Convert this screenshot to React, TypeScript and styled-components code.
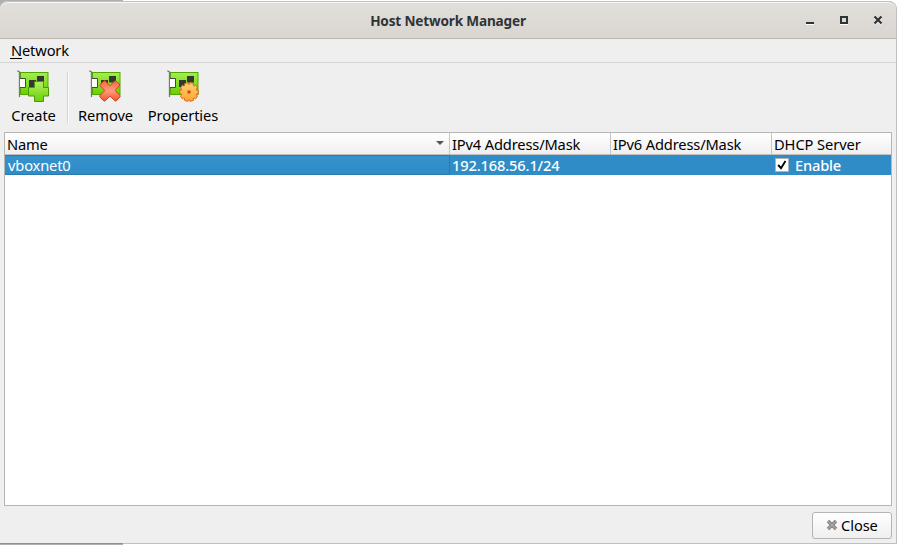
import React from "react";
import styled, { createGlobalStyle } from "styled-components";

const GlobalStyle = createGlobalStyle`
  * { box-sizing: border-box; }
  body { margin: 0; background: #fff; overflow: hidden; }
`;

const Desktop = styled.div`
  width: 898px;
  height: 545px;
  padding-top: 1px;
  background:
    linear-gradient(#b0b0b0, #b0b0b0) 0 0 / 123px 100% no-repeat,
    #fff;
  font: 14.667px/20px "Noto Sans", sans-serif;
  color: #000;
`;

const Window = styled.main`
  display: flex;
  flex-direction: column;
  width: 897px;
  height: 543px;
  border-right: 1px solid #bfbfbf;
  border-bottom: 1px solid #bfbfbf;
  border-radius: 8px 8px 0 0;
  background: #efefef;
`;

const TitleBar = styled.header`
  display: grid;
  grid-template-columns: 1fr auto 1fr;
  align-items: center;
  flex: none;
  height: 38px;
  border-top: 1px solid #bfc2bf;
  border-bottom: 1px solid #bfb8b1;
  border-radius: 8px 8px 0 0;
  background: linear-gradient(#e2dedb, #d9d5d0);
  box-shadow: inset 0 1px #f8f7f6;
`;

const Title = styled.h1`
  grid-column: 2;
  margin: 0;
  padding-top: 2px;
  color: #2e3436;
  font-size: 13.6px;
  font-weight: 700;
  line-height: 20px;
`;

const WindowControls = styled.div`
  display: flex;
  justify-content: flex-end;
  gap: 18px;
  padding-right: 10px;
`;

const ControlButton = styled.button`
  width: 16px;
  height: 16px;
  padding: 0;
  border: 0;
  background: none;
  svg { display: block; }
`;

const MenuBar = styled.nav`
  flex: none;
  height: 24px;
  padding: 1px 11px;
  border-bottom: 1px solid #d5d5d5;
`;

const Mnemonic = styled.span`
  display: inline-block;
  height: 19px;
  margin-left: -1px;
  padding-left: 1px;
  border-bottom: 1px solid #000;
  line-height: 20px;
`;

const Text = styled.span<{ $spacing?: number; $weight?: number }>`
  letter-spacing: ${({ $spacing = -0.08 }) => $spacing}px;
  font-weight: ${({ $weight }) => $weight ?? "inherit"};
  white-space: nowrap;
`;

const Toolbar = styled.div`
  display: flex;
  flex: none;
  height: 69px;
`;

const ToolButton = styled.button<{ $width: number }>`
  display: flex;
  flex-direction: column;
  align-items: center;
  width: ${({ $width }) => $width}px;
  padding: 7px 0 0;
  border: 0;
  background: none;
  font: inherit;
  color: inherit;
  svg { display: block; margin: 0 1px 3px 0; }
`;

const Separator = styled.div`
  width: 2px;
  height: 51px;
  margin-top: 9px;
  border-left: 1px solid #d5d5d5;
  border-right: 1px solid #fafafa;
`;

const Table = styled.section`
  flex: 1;
  margin: 0 4px;
  border: 1px solid #b5b5b5;
  background: #fff;
`;

const columns = "445px 161px 161px 1fr";

const HeaderRow = styled.div`
  display: grid;
  grid-template-columns: ${columns};
  height: 22px;
  background: linear-gradient(#fff, #efefef);
  border-bottom: 1px solid #c0c0c0;
`;

const HeaderCell = styled.div`
  display: flex;
  justify-content: space-between;
  padding: 1px 4px 0 2px;
  border-right: 1px solid #c6c6c6;
  &:last-child { border-right: 0; }
`;

const SortArrow = styled.svg`
  margin-top: 6px;
`;

const DataRow = styled.div`
  display: grid;
  grid-template-columns: ${columns};
  grid-template-rows: 20px;
  height: 20px;
  background: #308cc6;
  color: #fff;
  line-height: 18px;
`;

const DataCell = styled.div`
  display: flex;
  align-items: center;
  padding: 0 3px 1px 2px;
  &:first-child {
    padding: 0 3px;
    border: 1px solid #2a7cb0;
    border-left: 0;
    background: linear-gradient(#3592cc, #308cc6);
  }
  &:last-child { padding-left: 3px; }
`;

const CheckBox = styled.span`
  display: flex;
  width: 14px;
  height: 14px;
  margin-right: 6px;
  border: 1px solid #b2b2b2;
  background: #fff;
`;

const Footer = styled.footer`
  display: flex;
  justify-content: flex-end;
  flex: none;
  height: 37px;
  padding: 6px 4px 4px;
`;

const CloseButton = styled.button`
  display: flex;
  align-items: center;
  gap: 3px;
  width: 80px;
  height: 27px;
  padding: 0 0 1px 13px;
  border: 1px solid #b4b4b4;
  border-radius: 3px;
  background: linear-gradient(#fff, #efefef);
  font: inherit;
  color: #000;
`;

const BottomEdge = styled.div`
  width: 123px;
  height: 1px;
  margin-top: -1px;
  background: #909090;
`;

type Action = "add" | "remove" | "settings";

const TEETH = 10;

// Outline of a cog: four points per tooth, root-tip-tip-root.
const gearPoints = Array.from({ length: TEETH }, (_, i) =>
  [
    [-0.23, 7.9],
    [-0.2, 9.5],
    [0.2, 9.5],
    [0.23, 7.9],
  ].map(([offset, radius]) => {
    const angle = ((i + 0.5) * 2 * Math.PI) / TEETH + offset;
    return `${(radius * Math.sin(angle)).toFixed(2)},${(-radius * Math.cos(angle)).toFixed(2)}`;
  }),
)
  .flat()
  .join(" ");

function Gear() {
  return (
    <g transform="translate(22 22)">
      <polygon points={gearPoints} fill="url(#amber)" stroke="#dd6516" strokeWidth=".9" strokeLinejoin="round" />
      <circle r="1.8" fill="#d34b0a" />
    </g>
  );
}

function CardIcon({ action }: { action: Action }) {
  const board = `board-${action}`;
  return (
    <svg width="32" height="32" viewBox="0 0 32 32" overflow="visible">
      <defs>
        <linearGradient id={board} x2="0" y2="1">
          <stop stopColor="#a4ed50" /><stop offset="1" stopColor="#6bce00" />
        </linearGradient>
        <linearGradient id="lime" x2="0" y2="1">
          <stop stopColor="#b2ef66" /><stop offset="1" stopColor="#6bd000" />
        </linearGradient>
        <linearGradient id="coral" x2="0" y2="1">
          <stop stopColor="#f4653f" /><stop offset=".5" stopColor="#ff9b7d" /><stop offset="1" stopColor="#f4522d" />
        </linearGradient>
        <linearGradient id="amber" x2="0" y2="1">
          <stop stopColor="#ffd078" /><stop offset="1" stopColor="#ffa52e" />
        </linearGradient>
      </defs>
      <rect x="3.5" y="2.5" width="27.5" height="22" fill={`url(#${board})`} stroke="#52a800" />
      <path d="M.3 .8L2.5 2V27" fill="none" stroke="#777" strokeWidth="1.3" />
      <path d="M3 8.5H8.5V17.5H3" fill="#fff" stroke="#424a3b" />
      <path d="M12 10h7v7h-7zM20 6h7v6.5h-7z" fill="#343832" />
      {action === "add" && (
        <path d="M17.5 11.5H26.5V17.5H31.5V26H26.5V31.5H17.5V26H11.5V17.5H17.5Z" fill="url(#lime)" stroke="#479c00" />
      )}
      {action === "remove" && (
        <path d="M15.8 10.5L21 15.7L26.2 10.5Q28.8 11.8 31 15L26.2 20.5L31.4 26Q29.5 29.3 26.5 31.2L21 26.2L15.5 31.2Q12 29 10.5 26L15.8 20.5L10.8 15.5Q12.8 12 15.8 10.5Z" fill="url(#coral)" stroke="#cc3f1d" />
      )}
      {action === "settings" && <Gear />}
    </svg>
  );
}

export default function App() {
  return (
    <Desktop>
      <GlobalStyle />
      <Window>
        <TitleBar>
          <Title><Text $spacing={-0.17}>Host Network Manager</Text></Title>
          <WindowControls>
            <ControlButton aria-label="Minimize">
              <svg width="16" height="16"><path d="M4 12h8v1H4z" fill="#fff" /><path d="M4 10h8v2H4z" fill="#2e3436" /></svg>
            </ControlButton>
            <ControlButton aria-label="Maximize">
              <svg width="16" height="16"><path d="M4 12h8v1H4z" fill="#fff" /><path d="M5 5h6v6H5z" fill="none" stroke="#2e3436" strokeWidth="2" /></svg>
            </ControlButton>
            <ControlButton aria-label="Close window">
              <svg width="16" height="16"><path d="M4.7 5.7l6.6 6.6M11.3 5.7l-6.6 6.6" stroke="#fff" strokeWidth="2" /><path d="M4.5 4.5l7 7M11.5 4.5l-7 7" stroke="#2e3436" strokeWidth="2.2" /></svg>
            </ControlButton>
          </WindowControls>
        </TitleBar>
        <MenuBar><Text $spacing={-0.15}><Mnemonic>N</Mnemonic>etwork</Text></MenuBar>
        <Toolbar>
          <ToolButton $width={67}><CardIcon action="add" /><Text>Create</Text></ToolButton>
          <Separator />
          <ToolButton $width={73}><CardIcon action="remove" /><Text>Remove</Text></ToolButton>
          <ToolButton $width={82}><CardIcon action="settings" /><Text>Properties</Text></ToolButton>
        </Toolbar>
        <Table>
          <HeaderRow>
            <HeaderCell>
              <Text $spacing={-0.2}>Name</Text>
              <SortArrow width="10" height="6"><path d="M1 1h8L5 5z" fill="#555" /></SortArrow>
            </HeaderCell>
            <HeaderCell><Text $spacing={-0.15}>IPv4 Address/Mask</Text></HeaderCell>
            <HeaderCell><Text $spacing={-0.15}>IPv6 Address/Mask</Text></HeaderCell>
            <HeaderCell><Text>DHCP Server</Text></HeaderCell>
          </HeaderRow>
          <DataRow>
            <DataCell><Text $spacing={-0.15}>vboxnet0</Text></DataCell>
            <DataCell><Text $spacing={-0.15} $weight={500}>192.168.56.1/24</Text></DataCell>
            <DataCell />
            <DataCell>
              <CheckBox>
                <svg width="12" height="12"><path d="M2.2 6L5 9.2L9.5 2" fill="none" stroke="#000" strokeWidth="1.9" /></svg>
              </CheckBox>
              <Text $spacing={-0.2} $weight={500}>Enable</Text>
            </DataCell>
          </DataRow>
        </Table>
        <Footer>
          <CloseButton>
            <svg width="12" height="12"><path d="M2 2l8 8M10 2L2 10" stroke="#747474" strokeWidth="3.2" /><path d="M2 2l8 8M10 2L2 10" stroke="#aaa" strokeWidth="1.6" /></svg>
            <Text>Close</Text>
          </CloseButton>
        </Footer>
      </Window>
      <BottomEdge />
    </Desktop>
  );
}
